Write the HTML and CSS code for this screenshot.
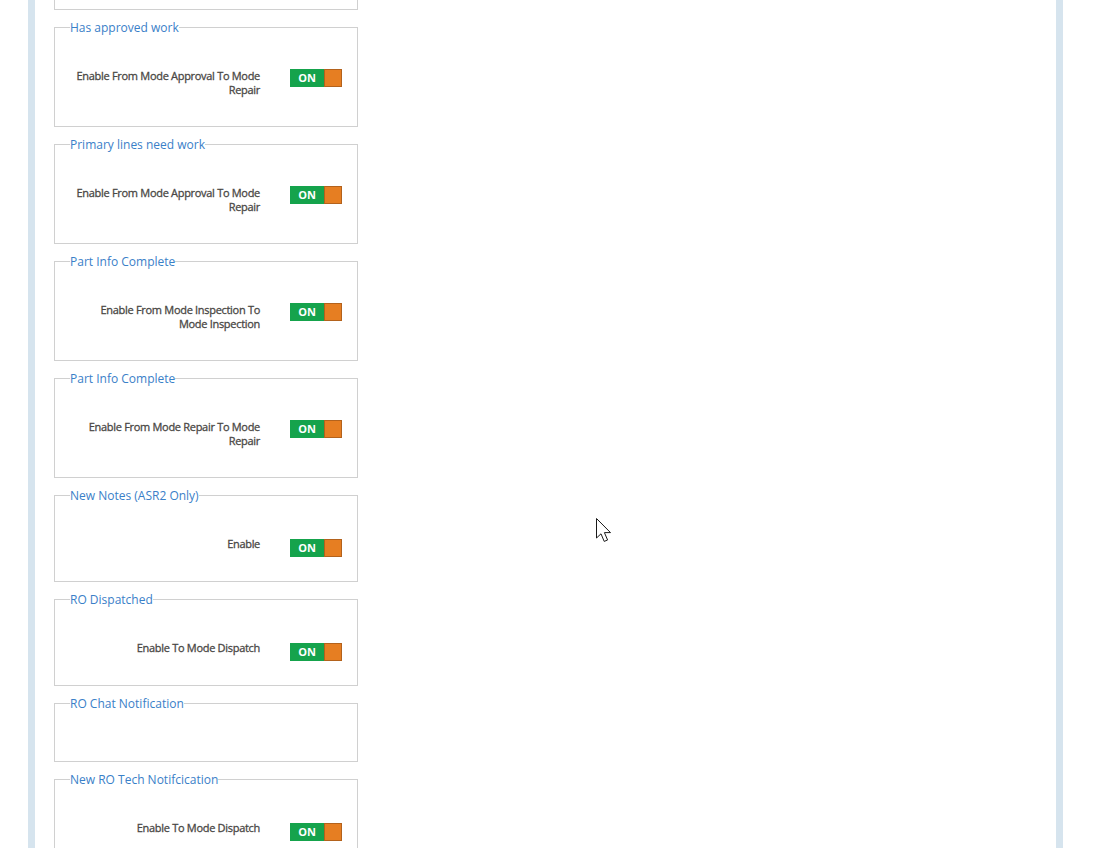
FILE: index.html
```html
<!DOCTYPE html>
<html>
<head>
<meta charset="utf-8">
<link rel="stylesheet" href="styles.css">
</head>
<body>
<div class="page">
  <div class="content">
    <div class="fs-cut"></div>

    <fieldset class="fs">
      <legend>Has approved work</legend>
      <div class="fs-body">
        <div class="row"><div class="lbl">Enable From Mode Approval To Mode Repair</div><span class="toggle"><span class="on">ON</span><span class="knob"></span></span></div>
      </div>
    </fieldset>

    <fieldset class="fs">
      <legend>Primary lines need work</legend>
      <div class="fs-body">
        <div class="row"><div class="lbl">Enable From Mode Approval To Mode Repair</div><span class="toggle"><span class="on">ON</span><span class="knob"></span></span></div>
      </div>
    </fieldset>

    <fieldset class="fs">
      <legend>Part Info Complete</legend>
      <div class="fs-body">
        <div class="row"><div class="lbl">Enable From Mode Inspection To Mode Inspection</div><span class="toggle"><span class="on">ON</span><span class="knob"></span></span></div>
      </div>
    </fieldset>

    <fieldset class="fs">
      <legend>Part Info Complete</legend>
      <div class="fs-body">
        <div class="row"><div class="lbl">Enable From Mode Repair To Mode Repair</div><span class="toggle"><span class="on">ON</span><span class="knob"></span></span></div>
      </div>
    </fieldset>

    <fieldset class="fs">
      <legend>New Notes (ASR2 Only)</legend>
      <div class="fs-body single">
        <div class="row"><div class="lbl">Enable</div><span class="toggle"><span class="on">ON</span><span class="knob"></span></span></div>
      </div>
    </fieldset>

    <fieldset class="fs">
      <legend>RO Dispatched</legend>
      <div class="fs-body single">
        <div class="row"><div class="lbl">Enable To Mode Dispatch</div><span class="toggle"><span class="on">ON</span><span class="knob"></span></span></div>
      </div>
    </fieldset>

    <fieldset class="fs">
      <legend>RO Chat Notification</legend>
      <div class="fs-body empty"></div>
    </fieldset>

    <fieldset class="fs">
      <legend>New RO Tech Notifcication</legend>
      <div class="fs-body single">
        <div class="row"><div class="lbl">Enable To Mode Dispatch</div><span class="toggle"><span class="on">ON</span><span class="knob"></span></span></div>
      </div>
    </fieldset>
  </div>
</div>
<svg class="cursor" width="20" height="28" viewBox="0 0 20 28">
  <path d="M1.5 1.5 L1.5 21 L6 16.8 L9.2 24.4 L12.6 23 L9.4 15.6 L15.5 15.6 Z" fill="#fff" stroke="#1a1a1a" stroke-width="1" stroke-linejoin="miter"/>
</svg>
</body>
</html>
```

FILE: styles.css
```css
html, body {
  margin: 0;
  padding: 0;
  background: #fff;
  height: 100%;
  overflow: hidden;
}
body {
  font-family: "Open Sans", "Liberation Sans", sans-serif;
  position: relative;
}
.page {
  margin-left: 28px;
  width: 1021px;
  min-height: 848px;
  border-left: 7px solid #d6e4ee;
  border-right: 7px solid #d6e4ee;
  background: #fff;
}
.content {
  padding-left: 19px;
}
.fs-cut {
  width: 302px;
  height: 9px;
  border: 1px solid #d0d0d0;
  border-top: none;
  margin-bottom: 9px;
}
.fs {
  width: 272px;
  margin: 0 0 9px 0;
  padding: 0 15px;
  border: 1px solid #d0d0d0;
  min-inline-size: 0;
}
.fs legend {
  padding: 0;
  font-size: 12px;
  line-height: 17px;
  color: #3a80c8;
}
.fs-body {
  padding: 33px 0 27px;
}
.fs-body.single {
  padding-top: 35px;
  padding-bottom: 24px;
}
.fs-body.empty {
  padding: 0;
  height: 49px;
}
.row {
  display: flex;
  align-items: flex-start;
  gap: 30px;
}
.lbl {
  width: 190px;
  text-align: right;
  font-size: 11px;
  font-weight: 400;
  letter-spacing: -0.3px;
  -webkit-text-stroke: 0.3px #4a4845;
  line-height: 14px;
  color: #4a4845;
  padding-bottom: 2px;
}
.single .lbl {
  margin-top: -2px;
}
.toggle {
  display: flex;
  height: 18px;
  width: 52px;
}
.on {
  width: 34px;
  height: 18px;
  background: #15a34c;
  color: #fff;
  font-size: 11px;
  font-weight: 700;
  line-height: 18px;
  text-align: center;
}
.knob {
  width: 16px;
  height: 16px;
  background: #e67e22;
  border: 1px solid #b3621c;
}
.cursor {
  position: absolute;
  left: 595px;
  top: 517px;
}
```
